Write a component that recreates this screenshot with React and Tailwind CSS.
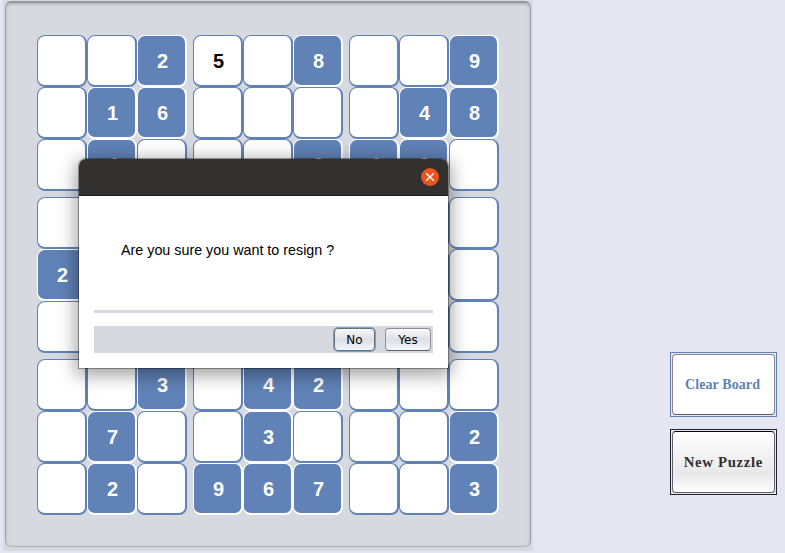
const PUZZLE = [
  '..2|5.8|..9',
  '.16|...|.48',
  '.4.|..3|43.',
  '...|...|...',
  '2..|...|...',
  '...|...|...',
  '..3|.42|...',
  '.7.|.3.|..2',
  '.2.|967|..3',
].map((row) => row.split('|'));

function Cell({ value, entered }) {
  const filled = value !== '.' && !entered;
  return (
    <div
      className={
        'flex h-[52px] w-[50px] items-center justify-center rounded-[8px] border-t-[1.5px] border-l-[1.5px] border-r-2 border-b-2 text-[20px] font-bold leading-none ' +
        (filled ? 'border-white bg-[#6082b6] text-white' : 'border-[#6082b6] bg-white text-black')
      }
    >
      {value !== '.' && <span className="relative left-px">{value}</span>}
    </div>
  );
}

function Board() {
  return (
    <div className="ml-[3px] h-[551px] w-[530px] bg-[#d6d9e0] pt-px pl-[2px]">
      <div className="h-[546px] w-[526px] rounded-[6px] border-t-2 border-r border-b border-l border-t-[#97999f] border-r-[#9b9da3] border-b-[#b0b2b8] border-l-[#a6a8ae] pt-[32px] pl-[31px] shadow-[inset_0_1px_3px_rgba(0,0,0,0.22)]">
        <div className="flex flex-col gap-[6px]">
          {[0, 3, 6].map((band) => (
            <div key={band} className="flex flex-col">
              {PUZZLE.slice(band, band + 3).map((row, r) => (
                <div key={r} className="flex gap-[6px]">
                  {row.map((group, g) => (
                    <div key={g} className="flex">
                      {group.split('').map((value, c) => (
                        <Cell key={c} value={value} entered={value === '5'} />
                      ))}
                    </div>
                  ))}
                </div>
              ))}
            </div>
          ))}
        </div>
      </div>
    </div>
  );
}

function ResignDialog() {
  return (
    <div className="absolute top-[159px] left-[79px] flex h-[209px] w-[369px] flex-col rounded-t-[7px] bg-white shadow-[0_0_0_1px_rgba(0,0,0,0.33),0_4px_18px_3px_rgba(0,0,0,0.38)]">
      <div className="flex h-[37px] shrink-0 items-center justify-end rounded-t-[7px] border-b border-[#1f1d1d] bg-[#333030] pr-[9px]">
        <button className="flex size-[18px] items-center justify-center rounded-full bg-[#e95420]">
          <svg width="10" height="10" viewBox="0 0 10 10" stroke="white" strokeWidth="1.4">
            <path d="M1.2 1.2 8.8 8.8M8.8 1.2 1.2 8.8" />
          </svg>
        </button>
      </div>
      <div className="flex h-[114px] items-center pb-[7px] pl-[42px]">
        <span className="origin-left scale-x-[0.954] text-[15px] leading-none whitespace-nowrap text-black">
          Are you sure you want to resign ?
        </span>
      </div>
      <div className="mx-[15px] h-[3px] shrink-0 bg-[#d6d9e0]" />
      <div className="mx-[15px] mt-[13px] flex h-[27px] items-center justify-end gap-[10px] bg-[#d6d9e0] pr-[2px] font-['DejaVu_Sans',sans-serif] text-[12px] leading-none text-black">
        <button className="h-[23px] w-[41px] rounded-[4px] border border-[#66707b] bg-linear-to-b from-[#fafafc] via-[#dcdfe5] to-[#f5f6fa] shadow-[0_0_0_1px_#73a4d1]">
          No
        </button>
        <button className="h-[23px] w-[46px] rounded-[4px] border border-[#8b8e95] border-b-[#5d6066] bg-linear-to-b from-[#fafafc] via-[#dcdfe5] to-[#f5f6fa]">
          Yes
        </button>
      </div>
    </div>
  );
}

export default function App() {
  return (
    <div className="relative flex h-[553px] w-[785px] overflow-hidden bg-[#e6e6f3] font-['Liberation_Sans',Arial,sans-serif]">
      <Board />
      <div className="ml-[137px] flex flex-col gap-[12px] pt-[352px] font-['Palatino','Liberation_Serif',serif] text-[14px] font-bold">
        <div className="h-[65px] w-[107px] border border-[#6082b6] p-px">
          <button className="h-[61px] w-[103px] rounded-[4px] border border-[#85858f] border-b-[#5b5b65] bg-white text-[#6082b6]">
            <span className="relative -left-px inline-block tracking-[0.1px] whitespace-nowrap">Clear Board</span>
          </button>
        </div>
        <div className="h-[66px] w-[107px] border border-[#252329] p-px">
          <button className="h-[62px] w-[103px] rounded-[4px] border border-[#62626e] border-t-[#08080c] bg-linear-to-b from-white via-[#e8e8e8] via-70% to-white text-[#333030]">
            <span className="inline-block scale-x-[1.06] tracking-[0.6px] whitespace-nowrap">New Puzzle</span>
          </button>
        </div>
      </div>
      <ResignDialog />
    </div>
  );
}
